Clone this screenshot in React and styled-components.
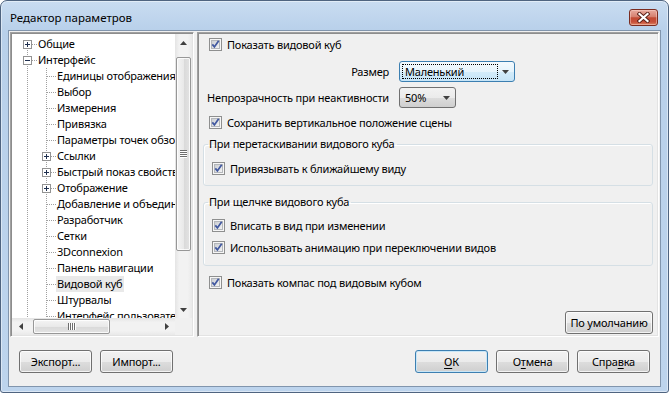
import React from 'react'
import styled, { createGlobalStyle } from 'styled-components'

const GlobalStyle = createGlobalStyle`
  html, body { margin: 0; padding: 0; background: #fff; }
  body {
    font-family: "Noto Sans", "Segoe UI", sans-serif;
    font-size: 11px;
    letter-spacing: -0.2px;
    color: #000;
  }
  * { box-sizing: border-box; }
`

const tree = [
  { level: 0, text: 'Общие', box: '+', first: true },
  { level: 0, text: 'Интерфейс', box: '-' },
  { level: 1, text: 'Единицы отображения' },
  { level: 1, text: 'Выбор' },
  { level: 1, text: 'Измерения' },
  { level: 1, text: 'Привязка' },
  { level: 1, text: 'Параметры точек обзора' },
  { level: 1, text: 'Ссылки', box: '+' },
  { level: 1, text: 'Быстрый показ свойств', box: '+' },
  { level: 1, text: 'Отображение', box: '+' },
  { level: 1, text: 'Добавление и объединение' },
  { level: 1, text: 'Разработчик' },
  { level: 1, text: 'Сетки' },
  { level: 1, text: '3Dconnexion' },
  { level: 1, text: 'Панель навигации' },
  { level: 1, text: 'Видовой куб', selected: true },
  { level: 1, text: 'Штурвалы' },
  { level: 1, text: 'Интерфейс пользователя' },
]

const Window = styled.div`
  width: 669px;
  height: 393px;
  border: 1px solid #4f6480;
  border-radius: 7px 7px 3px 3px;
  background: linear-gradient(180deg, #c9dcf1 0, #b8d0ea 30px, #bdd4ed 100%);
  box-shadow: inset 0 0 0 1px rgba(255, 255, 255, 0.45);
  display: flex;
  flex-direction: column;
  overflow: hidden;
`

const TitleBar = styled.div`
  height: 29px;
  flex-shrink: 0;
  display: flex;
  align-items: center;
  justify-content: space-between;
  padding: 4px 10px 0 9px;
`

const Title = styled.span`
  font-size: 11.5px;
  letter-spacing: 0;
`

const CloseButton = styled.div`
  width: 29px;
  height: 17px;
  border: 1px solid #7b2c20;
  border-radius: 3px;
  background: linear-gradient(180deg, #e8ab9f 0%, #d6806f 45%, #c24a33 52%, #c7503a 80%, #de8664 100%);
  box-shadow: inset 0 0 0 1px rgba(255, 220, 210, 0.45);
  display: flex;
  align-items: center;
  justify-content: center;
`

const Client = styled.div`
  flex: 1;
  margin: 0 7px 5px 7px;
  border: 1px solid #8195ad;
  background: #f0f0f0;
  padding: 1px 1px 0 1px;
  display: flex;
  flex-direction: column;
`

const TopArea = styled.div`
  height: 305px;
  display: flex;
  gap: 3px;
`

const Sunken = styled.div`
  border: 1px solid;
  border-color: #a0a0a0 #ffffff #ffffff #a0a0a0;
  box-shadow: inset 1px 1px 0 #8d8d8d, inset -1px -1px 0 #e3e3e3;
`

const TreeBox = styled(Sunken)`
  width: 184px;
  background: #fff;
  padding: 1px;
  display: flex;
  flex-direction: column;
`

const TreeMain = styled.div`
  flex: 1;
  display: flex;
  min-height: 0;
`

const TreeContent = styled.div`
  flex: 1;
  overflow: hidden;
  padding: 2px 0 0 6px;
`

const TreeRow = styled.div`
  display: flex;
  align-items: center;
  height: 16px;
  white-space: nowrap;
`

const GuideSvg = styled.svg`
  flex-shrink: 0;
  display: block;
`

const TreeLabel = styled.span`
  padding: 0 2px 0 1px;
  line-height: 16px;
  background: ${p => (p.$selected ? '#e9e9e9' : 'transparent')};
`

const VScroll = styled.div`
  width: 17px;
  display: flex;
  flex-direction: column;
  background: linear-gradient(90deg, #e4e4e4 0%, #f2f2f2 25%, #f2f2f2 75%, #e9e9e9 100%);
`

const HScrollRow = styled.div`
  height: 17px;
  display: flex;
  flex-shrink: 0;
`

const HScroll = styled.div`
  flex: 1;
  display: flex;
  background: linear-gradient(180deg, #e4e4e4 0%, #f2f2f2 25%, #f2f2f2 75%, #e9e9e9 100%);
`

const Corner = styled.div`
  width: 17px;
  background: #f0f0f0;
`

const ScrollBtn = styled.div`
  width: 17px;
  height: 17px;
  flex-shrink: 0;
  display: flex;
  align-items: center;
  justify-content: center;
`

const Spacer = styled.div`
  flex: 1;
`

const VThumb = styled.div`
  margin: 6px 1px 0;
  height: 194px;
  border: 1px solid #979797;
  border-radius: 2px;
  background: linear-gradient(90deg, #f4f4f4 0%, #e9e9e9 50%, #d9d9d9 51%, #e3e3e3 100%);
  box-shadow: inset 0 0 0 1px rgba(255, 255, 255, 0.8);
  display: flex;
  align-items: center;
  justify-content: center;
`

const HThumb = styled.div`
  margin: 1px 0 1px 4px;
  width: 77px;
  border: 1px solid #979797;
  border-radius: 2px;
  background: linear-gradient(180deg, #f4f4f4 0%, #e9e9e9 50%, #d9d9d9 51%, #e3e3e3 100%);
  box-shadow: inset 0 0 0 1px rgba(255, 255, 255, 0.8);
  display: flex;
  align-items: center;
  justify-content: center;
`

const RightPanel = styled(Sunken)`
  flex: 1;
  padding: 3px 5px 0 5px;
  display: flex;
  flex-direction: column;
`

const CheckRow = styled.label`
  display: flex;
  align-items: center;
  gap: 5px;
  height: 16px;
  margin: ${p => p.$top || 0}px 0 0 ${p => p.$left ?? 6}px;
  white-space: nowrap;
`

const FieldGrid = styled.div`
  display: grid;
  grid-template-columns: 186px auto;
  grid-auto-rows: 21px;
  column-gap: 10px;
  row-gap: 5px;
  align-items: center;
  margin-top: 9px;
`

const FieldLabel = styled.span`
  text-align: right;
  white-space: nowrap;
`

const Combo = styled.div`
  width: ${p => p.$w}px;
  height: 21px;
  display: flex;
  align-items: center;
  border: 1px solid ${p => (p.$focused ? '#3c7fb1' : '#707070')};
  border-radius: 3px;
  background: ${p =>
    p.$focused
      ? 'linear-gradient(180deg, #f4fafe 0%, #e6f4fc 50%, #d4ecfa 51%, #c6e4f7 100%)'
      : 'linear-gradient(180deg, #f2f2f2 0%, #ebebeb 50%, #dddddd 51%, #cfcfcf 100%)'};
  padding-right: 5px;
`

const ComboText = styled.span`
  flex: 1;
  margin: 0 4px 0 2px;
  padding: 0 2px;
  line-height: 13px;
  border: 1px dotted ${p => (p.$focused ? '#000' : 'transparent')};
  white-space: nowrap;
`

const Group = styled.fieldset`
  margin: ${p => p.$top}px 0 0 0;
  padding: 0 0 ${p => p.$bottom}px 0;
  border: 1px solid #d5dfe5;
  border-radius: 3px;
  box-shadow: inset 1px 1px 0 #fff;
  min-width: 0;
`

const Legend = styled.legend`
  margin-left: 4px;
  padding: 0 2px 0 1px;
  line-height: 16px;
`

const Button = styled.button`
  width: ${p => p.$w || 73}px;
  height: 23px;
  padding: 0;
  font: inherit;
  letter-spacing: inherit;
  color: #000;
  border: 1px solid ${p => (p.$default ? '#3c7fb1' : '#707070')};
  border-radius: 3px;
  background: linear-gradient(180deg, #f2f2f2 0%, #ebebeb 50%, #dddddd 51%, #cfcfcf 100%);
  box-shadow: inset 0 0 0 1px ${p => (p.$default ? '#c8e6f7' : 'rgba(255, 255, 255, 0.75)')};
  flex-shrink: 0;
`

const DefaultsButton = styled(Button)`
  align-self: flex-end;
  margin-top: 21px;
`

const ButtonRow = styled.div`
  flex: 1;
  display: flex;
  align-items: flex-start;
  gap: 8px;
  padding: 13px 9px 0 9px;
`

const Access = styled.u`
  text-decoration-thickness: 1px;
  text-underline-offset: 2px;
`

const Guide = ({ up = true, down = true, branch = false, box }) => (
  <GuideSvg width="19" height="16" viewBox="0 0 19 16" shapeRendering="crispEdges">
    <line x1="9.5" x2="9.5" y1={up ? 0 : 8} y2={down ? 16 : 8} stroke="#a0a0a0" strokeDasharray="1 1" />
    {branch && <line x1="10" x2="19" y1="8.5" y2="8.5" stroke="#a0a0a0" strokeDasharray="1 1" />}
    {box && (
      <g>
        <rect x="5.5" y="4.5" width="8" height="8" fill="#fff" stroke="#939393" />
        <line x1="7" x2="12" y1="8.5" y2="8.5" stroke="#1f2f4f" />
        {box === '+' && <line x1="9.5" x2="9.5" y1="6" y2="11" stroke="#1f2f4f" />}
      </g>
    )}
  </GuideSvg>
)

const Arrow = ({ dir }) => {
  const paths = {
    up: 'M0 4 L3.5 0 L7 4 Z',
    down: 'M0 0 L7 0 L3.5 4 Z',
    left: 'M4 0 L4 7 L0 3.5 Z',
    right: 'M0 0 L4 3.5 L0 7 Z',
  }
  const vertical = dir === 'up' || dir === 'down'
  return (
    <svg width={vertical ? 7 : 4} height={vertical ? 4 : 7} viewBox={vertical ? '0 0 7 4' : '0 0 4 7'}>
      <path d={paths[dir]} fill="#404040" />
    </svg>
  )
}

const Gripper = ({ vertical }) => (
  <svg width={vertical ? 7 : 8} height={vertical ? 8 : 7} viewBox={vertical ? '0 0 7 8' : '0 0 8 7'} shapeRendering="crispEdges">
    {[0, 2, 4, 6].map(o =>
      vertical ? (
        <g key={o}>
          <line x1="0" x2="7" y1={o + 0.5} y2={o + 0.5} stroke="#6e6e6e" />
          <line x1="0" x2="7" y1={o + 1.5} y2={o + 1.5} stroke="#fff" />
        </g>
      ) : (
        <g key={o}>
          <line y1="0" y2="7" x1={o + 0.5} x2={o + 0.5} stroke="#6e6e6e" />
          <line y1="0" y2="7" x1={o + 1.5} x2={o + 1.5} stroke="#fff" />
        </g>
      )
    )}
  </svg>
)

const CheckBox = () => (
  <svg width="13" height="13" viewBox="0 0 13 13" style={{ flexShrink: 0 }}>
    <defs>
      <linearGradient id="cbFill" x1="0" y1="0" x2="1" y2="1">
        <stop offset="0" stopColor="#c9ccd1" />
        <stop offset="1" stopColor="#f5f5f5" />
      </linearGradient>
    </defs>
    <rect x="0.5" y="0.5" width="12" height="12" fill="#f6f6f6" stroke="#8e8f8f" shapeRendering="crispEdges" />
    <rect x="2.5" y="2.5" width="8" height="8" fill="url(#cbFill)" stroke="#b4b7bb" shapeRendering="crispEdges" />
    <path d="M3.3 6.4 L5.4 8.9 L9.7 2.8" fill="none" stroke="#4259a0" strokeWidth="1.8" />
  </svg>
)

const Check = ({ children, top, left }) => (
  <CheckRow $top={top} $left={left}>
    <CheckBox />
    <span>{children}</span>
  </CheckRow>
)

const ComboBox = ({ value, width, focused }) => (
  <Combo $w={width} $focused={focused}>
    <ComboText $focused={focused}>{value}</ComboText>
    <Arrow dir="down" />
  </Combo>
)

const App = () => {
  return (
    <>
      <GlobalStyle />
      <Window>
        <TitleBar>
          <Title>Редактор параметров</Title>
          <CloseButton>
            <svg width="13" height="11" viewBox="0 0 13 11">
              <path d="M2.5 2 L10.5 9 M10.5 2 L2.5 9" stroke="#5a2018" strokeWidth="4" strokeLinecap="square" />
              <path d="M2.5 2 L10.5 9 M10.5 2 L2.5 9" stroke="#fff" strokeWidth="2.2" strokeLinecap="square" />
            </svg>
          </CloseButton>
        </TitleBar>

        <Client>
          <TopArea>
            <TreeBox>
              <TreeMain>
                <TreeContent>
                  {tree.map(item => (
                    <TreeRow key={item.text}>
                      {item.level === 0 ? (
                        <Guide up={!item.first} branch box={item.box} />
                      ) : (
                        <>
                          <Guide />
                          <Guide branch box={item.box} />
                        </>
                      )}
                      <TreeLabel $selected={item.selected}>{item.text}</TreeLabel>
                    </TreeRow>
                  ))}
                </TreeContent>
                <VScroll>
                  <ScrollBtn><Arrow dir="up" /></ScrollBtn>
                  <VThumb><Gripper vertical /></VThumb>
                  <Spacer />
                  <ScrollBtn><Arrow dir="down" /></ScrollBtn>
                </VScroll>
              </TreeMain>
              <HScrollRow>
                <HScroll>
                  <ScrollBtn><Arrow dir="left" /></ScrollBtn>
                  <HThumb><Gripper /></HThumb>
                  <Spacer />
                  <ScrollBtn><Arrow dir="right" /></ScrollBtn>
                </HScroll>
                <Corner />
              </HScrollRow>
            </TreeBox>

            <RightPanel>
              <Check top={0}>Показать видовой куб</Check>
              <FieldGrid>
                <FieldLabel>Размер</FieldLabel>
                <ComboBox value="Маленький" width={116} focused />
                <FieldLabel>Непрозрачность при неактивности</FieldLabel>
                <ComboBox value="50%" width={57} />
              </FieldGrid>
              <Check top={6}>Сохранить вертикальное положение сцены</Check>

              <Group $top={6} $bottom={9}>
                <Legend>При перетаскивании видового куба</Legend>
                <Check top={8} left={8}>Привязывать к ближайшему виду</Check>
              </Group>

              <Group $top={8} $bottom={10}>
                <Legend>При щелчке видового куба</Legend>
                <Check top={7} left={8}>Вписать в вид при изменении</Check>
                <Check top={6} left={8}>Использовать анимацию при переключении видов</Check>
              </Group>

              <Check top={8}>Показать компас под видовым кубом</Check>

              <DefaultsButton $w={88}>По умолчанию</DefaultsButton>
            </RightPanel>
          </TopArea>

          <ButtonRow>
            <Button>Экспорт...</Button>
            <Button>Импорт...</Button>
            <Spacer />
            <Button $default><Access>О</Access>К</Button>
            <Button>О<Access>т</Access>мена</Button>
            <Button>Спра<Access>в</Access>ка</Button>
          </ButtonRow>
        </Client>
      </Window>
    </>
  )
}

export default App
